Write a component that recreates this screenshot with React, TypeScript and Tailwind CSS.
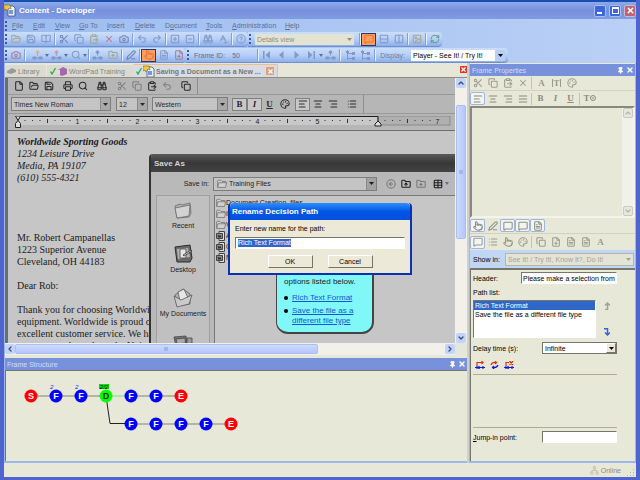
import type { ReactNode } from "react";
import { clsx } from "clsx";
import {
  AlignCenter,
  AlignJustify,
  AlignLeft,
  AlignRight,
  BookOpen,
  Binoculars,
  Camera,
  ChevronDown,
  ChevronLeft,
  ChevronRight,
  ChevronUp,
  CircleArrowLeft,
  CircleHelp,
  ClipboardPaste,
  Columns2,
  Copy,
  File,
  FilePlus,
  FileText,
  FolderOpen,
  FolderPlus,
  FolderUp,
  Image,
  List,
  MessageSquare,
  Network,
  Palette,
  PenLine,
  Pin,
  Pointer,
  Printer,
  Redo2,
  RefreshCw,
  Rows2,
  Save,
  Scissors,
  Search,
  SpellCheck,
  SquareMinus,
  SquarePlus,
  Table,
  Undo2,
  X
} from "lucide-react";
import type { LucideIcon } from "lucide-react";

type ToolProps = {
  icon: LucideIcon;
  label: string;
  className?: string;
};

const toolBox = "flex h-[13px] w-[15px] shrink-0 items-center justify-center";

function Tool({ icon: Icon, label, className }: ToolProps) {
  return (
    <button type="button" aria-label={label} className={clsx(toolBox, className)}>
      <Icon size={10} strokeWidth={2.5} />
    </button>
  );
}

function DrawnTool({ label, className, children }: { label: string; className?: string; children: ReactNode }) {
  return (
    <button type="button" aria-label={label} className={clsx(toolBox, className)}>
      {children}
    </button>
  );
}

function LetterTool({ label, className, children }: { label: string; className?: string; children: ReactNode }) {
  return (
    <button
      type="button"
      aria-label={label}
      className={clsx(toolBox, "font-['Liberation_Serif',serif] text-[9px] font-bold", className)}
    >
      {children}
    </button>
  );
}

function Sep({ className = "bg-[#7f9fd8] shadow-[1px_0_0_#e6effd]" }: { className?: string }) {
  return <span className={clsx("mx-px h-3 w-px shrink-0", className)} />;
}

function Grip() {
  return <span className="mx-px h-[10px] w-0 shrink-0 border-l-2 border-dotted border-[#3c5a9c]" />;
}

function Bar({ children }: { children: ReactNode }) {
  return (
    <div className="flex h-[15px] items-center rounded-r-sm border-b border-[#6f8fd0] bg-linear-to-b from-[#cbdefb] via-[#b7cff7] to-[#8eafe8] text-[#8299c6]">
      {children}
    </div>
  );
}

type DropProps = {
  label: string;
  value: string;
  className?: string;
  arrowClass?: string;
};

function Drop({ label, value, className, arrowClass }: DropProps) {
  return (
    <span className={clsx("relative flex shrink-0", className)}>
      <select aria-label={label} className="w-full appearance-none bg-transparent px-[2px] leading-[11px] outline-none">
        <option>{value}</option>
      </select>
      <span
        className={clsx(
          "pointer-events-none absolute inset-y-0 right-0 flex w-[10px] items-center justify-center",
          arrowClass
        )}
      >
        <svg width="5" height="3" viewBox="0 0 5 3" fill="currentColor">
          <path d="M0 0h5L2.5 3z" />
        </svg>
      </span>
    </span>
  );
}

function TinyArrow() {
  return (
    <svg width="4" height="3" viewBox="0 0 4 3" className="shrink-0" fill="#5d6f96">
      <path d="M0 0h4L2 3z" />
    </svg>
  );
}

function AppIcon() {
  return (
    <svg width="12" height="13" viewBox="0 0 12 13">
      <path d="M4 2h5l2 2v8H4z" fill="#eef1fa" stroke="#44516f" strokeWidth=".8" />
      <path d="M5 6h4v4H5z" fill="#6d9ae8" />
      <path d="M0 1h6l1 4-2-1-2 3-1-2-2 1z" fill="#f2c744" stroke="#6b5b22" strokeWidth=".5" />
    </svg>
  );
}

// pair of frames on a line, with a coloured head above them
function LinkIcon({ head = "#d8b48a" }: { head?: string }) {
  return (
    <svg width="11" height="10" viewBox="0 0 11 10" fill="none" stroke="currentColor">
      <path d="M0 8h11" strokeWidth="1.200" />
      <path d="M1 6.500h3v3H1zM7 6.500h3v3H7z" fill="currentColor" stroke="none" />
      <path d="M5.500 5.500V2" />
      <path d="m5.500 0 2.200 2.200-2.200 2.200-2.200-2.200z" fill={head} stroke="none" />
    </svg>
  );
}

function BranchIcon() {
  return (
    <svg width="11" height="10" viewBox="0 0 11 10" fill="none" stroke="currentColor">
      <path d="M2.500 0v10M2.500 3.500H9M2.500 8.500H9" />
      <path d="M1 1h3v2H1zM7 2h3v3H7zM7 7h3v3H7z" fill="currentColor" stroke="none" />
    </svg>
  );
}

function NavIcon({ d }: { d: string }) {
  return (
    <svg width="7" height="8" viewBox="0 0 7 8" fill="currentColor">
      <path d={d} />
    </svg>
  );
}

function FolderIcon({ size = 10 }: { size?: number }) {
  return (
    <svg width={size} height={size} viewBox="0 0 16 16" className="shrink-0" fill="#d0d0d0" stroke="#5a5a5a" strokeLinejoin="round">
      <path d="M1 13V3l1-1h4l2 2h6v3" />
      <path d="M1 13.5 3 6h12.500l-2 7.500z" />
    </svg>
  );
}

function WordFileIcon() {
  return (
    <svg width="10" height="10" viewBox="0 0 10 10" className="shrink-0">
      <path d="M3 .5h5.500v9H3z" fill="#ddd" stroke="#444" />
      <path d="M.5 2.500h6v5h-6z" fill="#8c8c8c" stroke="#444" />
      <path d="M2 4l1 2.500L4 4.500l1 2" fill="none" stroke="#111" strokeWidth=".8" />
    </svg>
  );
}

function RecentIcon() {
  return (
    <svg width="18" height="18" viewBox="0 0 18 18" stroke="#6a6a6a" strokeWidth=".8" strokeLinejoin="round">
      <path d="m1 5 5-2 2 1 8-2 1 10-2 4-12 1z" fill="#b4b4b4" />
      <path d="m1 7 15-3-1 11-12 2z" fill="#d2d2d2" />
    </svg>
  );
}

function DesktopIcon() {
  return (
    <svg width="21" height="20" viewBox="0 0 21 20">
      <path d="M2 3 17 1l2 13-2 4H4z" fill="#6a6a6a" stroke="#2c2c2c" />
      <path d="M4 5l11-1 2 9-12 2z" fill="#b4b4b4" />
      <path d="M7 5h6v9H7z" fill="#e5e5e5" stroke="#333" strokeWidth=".7" />
      <path d="m10 11 8-5 1 1-8 5z" fill="#ddd" stroke="#222" strokeWidth=".7" />
    </svg>
  );
}

function DocumentsIcon() {
  return (
    <svg width="20" height="20" viewBox="0 0 20 20" stroke="#5a5a5a" strokeWidth=".8" strokeLinejoin="round">
      <path d="m2 7 8-6 7 5v10l-13 2z" fill="#b2b2b2" />
      <path d="m5 4 6-3 4 9-8 3z" fill="#e6e6e6" />
      <path d="m1 8 7 4 11-5-3 9-12 3z" fill="#cacaca" />
    </svg>
  );
}

function ComputerIcon() {
  return (
    <svg width="20" height="14" viewBox="0 0 20 14" stroke="#444" strokeWidth=".8">
      <path d="m1 2 12-1 1 9-11 1z" fill="#777" />
      <path d="m3 4 9-1 .5 5L4 9z" fill="#aaa" />
      <path d="M14 3h5v10h-5z" fill="#999" />
      <path d="M4 11h9v3H4z" fill="#666" />
    </svg>
  );
}

function CheckMark() {
  return (
    <svg width="6" height="8" viewBox="0 0 6 8" fill="none" stroke="#35b04a" strokeWidth="1.400">
      <path d="m.5 4.500 1.500 2.500L5.500 1" />
    </svg>
  );
}

function TitleBar() {
  return (
    <header className="flex h-[19px] shrink-0 items-center gap-[3px] border-t-2 border-[#1550b0] bg-linear-to-b from-[#8ea9ea] via-[#7690dc] to-[#7f9ce3]">
      <AppIcon />
      <h1 className="flex-1 text-[8px] font-bold text-white">Content - Developer</h1>
      <button type="button" aria-label="Minimize" className="flex size-3 items-end rounded-xs border border-[#a9bdf0] bg-[#3c66dc] p-[2px]">
        <span className="h-[2px] w-[5px] bg-white" />
      </button>
      <button type="button" aria-label="Maximize" className="flex size-3 items-center justify-center rounded-xs border border-[#a9bdf0] bg-[#3c66dc]">
        <span className="size-[7px] border border-t-2 border-white" />
      </button>
      <button type="button" aria-label="Close" className="flex size-3 items-center justify-center rounded-xs border border-[#c9b6da] bg-[#bd6472] text-white">
        <X size={9} strokeWidth={4} />
      </button>
    </header>
  );
}

const menus = [
  { name: "File", width: "w-[21px]" },
  { name: "Edit", width: "w-[22px]" },
  { name: "View", width: "w-6" },
  { name: "Go To", width: "w-7" },
  { name: "Insert", width: "w-7" },
  { name: "Delete", width: "w-[30px]" },
  { name: "Document", width: "w-[41px]" },
  { name: "Tools", width: "w-[26px]" },
  { name: "Administration", width: "w-[53px]" },
  { name: "Help", width: "w-5" }
];

function MenuBar() {
  return (
    <nav className="flex h-[13px] items-center text-[#5f6f8f]">
      <Grip />
      <span className="w-1" />
      {menus.map((menu) => {
        const at = menu.name === "Document" ? 1 : 0;
        return (
          <button key={menu.name} type="button" className={clsx("shrink-0 text-left whitespace-nowrap", menu.width)}>
            {menu.name.slice(0, at)}
            <u>{menu.name[at]}</u>
            {menu.name.slice(at + 1)}
          </button>
        );
      })}
    </nav>
  );
}

function Toolbars() {
  return (
    <>
      <div className="flex">
        <Bar>
          <Grip />
          <Tool icon={FolderOpen} label="Open" className="text-[#a3a68c]" />
          <Tool icon={Save} label="Save" />
          <Tool icon={BookOpen} label="Preview" />
          <Sep />
          <Tool icon={Scissors} label="Cut" className="text-[#6f88bc]" />
          <Tool icon={Copy} label="Copy" />
          <Tool icon={ClipboardPaste} label="Paste" className="text-[#a3a68c]" />
          <Tool icon={X} label="Delete" className="text-[#c0748c]" />
          <Tool icon={Camera} label="Capture" className="text-[#6f82aa]" />
          <Sep />
          <Tool icon={Undo2} label="Undo" />
          <Tool icon={Redo2} label="Redo" />
          <Sep />
          <Tool icon={SquarePlus} label="Expand" />
          <Tool icon={SquareMinus} label="Collapse" />
          <Sep />
          <Tool icon={Binoculars} label="Find" />
          <Tool icon={SpellCheck} label="Spelling" />
          <Sep />
          <Tool icon={CircleHelp} label="Help topics" />
        </Bar>
        <Bar>
          <Grip />
          <Drop label="View" value="Details view" className="ml-[3px] w-[99px] bg-[#e3e3d3] text-[#8f8f80]" />
          <span className="w-1" />
          <Sep />
          <Tool icon={MessageSquare} label="Outline" className="border border-[#27348b] bg-[#f9a15c] text-[#f17038]" />
          <Tool icon={Rows2} label="Split rows" />
          <Tool icon={Columns2} label="Split columns" />
          <Sep />
          <Tool icon={Image} label="Properties" className="text-[#a3a68c]" />
          <Sep />
          <Tool icon={RefreshCw} label="Refresh" className="text-[#62a08b]" />
        </Bar>
      </div>
      <div className="mt-px flex">
        <Bar>
          <Grip />
          <Tool icon={Camera} label="Record" className="text-[#a07d94]" />
          <Sep />
          <span className="w-1" />
          <DrawnTool label="Insert frame">
            <LinkIcon />
          </DrawnTool>
          <TinyArrow />
          <DrawnTool label="Link frame">
            <LinkIcon head="#d893a4" />
          </DrawnTool>
          <TinyArrow />
          <Tool icon={Search} label="Find frame" />
          <TinyArrow />
          <Sep />
          <DrawnTool label="Move frame">
            <LinkIcon head="#8299c6" />
          </DrawnTool>
          <Tool icon={FolderPlus} label="Add resource" className="text-[#a3a68c]" />
          <Sep />
          <Tool icon={PenLine} label="Edit frame" className="text-[#6f82aa]" />
          <Sep />
          <Tool icon={Pointer} label="Action area" className="border border-[#27348b] bg-[#f9a15c] text-[#e87a44]" />
          <Tool icon={FileText} label="Frame text" />
          <Tool icon={FilePlus} label="New text" className="text-[#a07d94]" />
        </Bar>
        <Bar>
          <Grip />
          <label htmlFor="frame-id" className="pl-1 text-[#5f6f8f]">Frame ID:</label>
          <input id="frame-id" defaultValue="50" className="ml-[7px] w-6 bg-transparent text-[#5f6f8f] outline-none" />
          <Sep />
          <DrawnTool label="First">
            <NavIcon d="M0 0h1.500v8H0zM7 0v8L2.500 4z" />
          </DrawnTool>
          <DrawnTool label="Previous">
            <NavIcon d="M5.500 0v8L1 4z" />
          </DrawnTool>
          <DrawnTool label="Next">
            <NavIcon d="M1.500 0v8L6 4z" />
          </DrawnTool>
          <DrawnTool label="Last">
            <NavIcon d="M5.500 0H7v8H5.500zM0 0v8l4.500-4z" />
          </DrawnTool>
          <TinyArrow />
          <DrawnTool label="Paths">
            <LinkIcon head="#8299c6" />
          </DrawnTool>
          <Sep />
          <span className="w-[2px]" />
          <DrawnTool label="Branch">
            <BranchIcon />
          </DrawnTool>
          <DrawnTool label="Join">
            <BranchIcon />
          </DrawnTool>
          <Sep />
          <span className="pr-[6px] pl-1 text-[#6f7f9f]">Display:</span>
          <Drop
            label="Display"
            value="Player - See It! / Try It!"
            className="mr-[3px] w-[94px] bg-white text-black"
            arrowClass="bg-[#b7cff7]"
          />
        </Bar>
      </div>
    </>
  );
}

function Tabs() {
  return (
    <div className="flex h-[14px] shrink-0 items-end bg-[#e7e7d9] text-[#85857c]">
      <button type="button" className="flex h-3 w-[41px] items-center gap-[2px] rounded-t-xs bg-[#dbdbd2] pl-[2px]">
        <svg width="9" height="6" viewBox="0 0 9 6" fill="#9b9b9b">
          <path d="m0 3 5-3 4 2v2L4 6 0 5z" />
        </svg>
        Library
      </button>
      <button type="button" className="ml-px flex h-3 w-[86px] items-center gap-[2px] rounded-t-xs bg-[#dbdbd2] pl-[3px]">
        <CheckMark />
        <svg width="9" height="9" viewBox="0 0 9 9">
          <path d="m0 3 5-3 4 2v5L4 9 0 7z" fill="#a468ad" />
          <path d="M0 3v4l2 1V3z" fill="#e6dcea" />
        </svg>
        WordPad Training
      </button>
      <button type="button" className="flex h-[13px] w-[145px] items-center gap-px rounded-t-xs border-t border-r border-[#f0c080] bg-[#d9dce4] pl-[3px] font-bold whitespace-nowrap text-[#77776f]">
        <CheckMark />
        <AppIcon />
        <span className="flex-1 text-left">Saving a Document as a New ...</span>
        <span className="mr-[3px] flex size-2 items-center justify-center bg-[#dba17b] text-white">
          <X size={7} strokeWidth={4} />
        </span>
      </button>
      <span className="flex-1" />
      <button type="button" aria-label="Close document" className="mb-[4px] flex size-[7px] items-center justify-center bg-[#e0352c] text-white">
        <X size={7} strokeWidth={4} />
      </button>
    </div>
  );
}

function GreyDrop({ label, value, className }: DropProps) {
  return (
    <Drop
      label={label}
      value={value}
      className={clsx("h-[14px] items-center border border-[#7d7d7d] bg-[#c4c4c4]", className)}
      arrowClass="border-l border-[#8a8a8a] bg-[#a9a9a9]"
    />
  );
}

const inches = [1, 2, 3, 4, 5, 7];

function Ruler() {
  const ticks = Array.from({ length: 56 }, (_, i) => i + 1);
  return (
    <div className="h-[17px] overflow-hidden border-b border-[#6c6c6c] pt-[2px]">
      <svg width="447" height="15" viewBox="0 0 447 15">
        <rect x="9" y="0" width="361" height="9" fill="#c8c8c8" />
        <rect x="370" y="0" width="72" height="9" fill="#b0b0b0" stroke="#8a8a8a" />
        <path d="M9 .5h361v9" fill="none" stroke="#222" />
        {ticks.map((tick) =>
          tick % 8 === 0 ? null : (
            <rect key={tick} x={9 + tick * 7.5} y={tick % 4 ? 4 : 3} width="1" height={tick % 4 ? 1 : 4} fill="#333" />
          )
        )}
        {inches.map((inch) => (
          <text key={inch} x={9.5 + inch * 60} y="8" fontSize="7" textAnchor="middle" fill="#222">
            {inch}
          </text>
        ))}
        <path d="M7.500 0h5l-2.500 4.500 2.500 3v4h-5v-4l2.500-3z" fill="#ddd" stroke="#222" />
        <path d="m370 5 3 3v2h-6V8z" fill="#ddd" stroke="#222" />
      </svg>
    </div>
  );
}

function WordPad() {
  const pressed = "border border-[#808080] bg-[#c8c8c8]";
  return (
    <div className="bg-[#b6b6b6] text-[#2a2a2a]">
      <div className="flex h-[17px] items-center border-b border-[#999] pl-[3px]">
        <Tool icon={File} label="New file" />
        <Tool icon={FolderOpen} label="Open file" />
        <Tool icon={Save} label="Save file" />
        <span className="w-1" />
        <Tool icon={Printer} label="Print" />
        <Tool icon={Search} label="Print preview" />
        <span className="w-1" />
        <Tool icon={Binoculars} label="Find text" />
        <span className="w-[5px]" />
        <Tool icon={Scissors} label="Cut text" className="text-[#808080]" />
        <Tool icon={Copy} label="Copy text" className="text-[#808080]" />
        <Tool icon={ClipboardPaste} label="Paste text" />
        <Tool icon={Undo2} label="Undo typing" className="text-[#808080]" />
        <span className="w-1" />
        <Tool icon={Copy} label="Date and time" />
        <span className="ml-1 h-full w-px bg-[#8d8d8d]" />
      </div>
      <div className="flex h-[19px] items-center border-b border-[#999] pl-[3px]">
        <GreyDrop label="Font" value="Times New Roman" className="w-[100px]" />
        <GreyDrop label="Font size" value="12" className="ml-[5px] w-8" />
        <GreyDrop label="Script" value="Western" className="ml-1 w-[76px]" />
        <LetterTool label="Bold" className={clsx("ml-1", pressed)}>B</LetterTool>
        <LetterTool label="Italic" className={clsx("italic", pressed)}>I</LetterTool>
        <LetterTool label="Underline" className="underline">U</LetterTool>
        <Tool icon={Palette} label="Colour" />
        <Tool icon={AlignLeft} label="Align left" className={clsx("ml-[3px]", pressed)} />
        <Tool icon={AlignCenter} label="Align centre" />
        <Tool icon={AlignRight} label="Align right" />
        <Tool icon={List} label="Bullets" className="ml-1" />
        <span className="ml-1 h-full w-px bg-[#8d8d8d]" />
      </div>
      <Ruler />
    </div>
  );
}

function Letter() {
  return (
    <article className="min-h-0 flex-1 overflow-hidden bg-[#c6c6c6] pt-[5px] pl-[9px] font-['Liberation_Serif',serif] text-[10px] leading-3 whitespace-pre text-[#1c1c1c]">
      <div className="italic">
        <p className="font-bold">Worldwide Sporting Goods</p>
        <p>1234 Leisure Drive</p>
        <p>Media, PA 19107</p>
        <p>(610) 555-4321</p>
      </div>
      <p className="mt-12">Mr. Robert Campanellas</p>
      <p>1223 Superior Avenue</p>
      <p>Cleveland, OH 44183</p>
      <p className="mt-3">Dear Rob:</p>
      <p className="mt-3">Thank you for choosing Worldwide</p>
      <p>equipment. Worldwide is proud of</p>
      <p>excellent customer service. We hav</p>
      <p>your events throughout the United</p>
    </article>
  );
}

const places = [
  { name: "Recent", icon: <RecentIcon /> },
  { name: "Desktop", icon: <DesktopIcon /> },
  { name: "My Documents", icon: <DocumentsIcon /> },
  { name: "", icon: <ComputerIcon /> }
];

const files = [
  { name: "Document Creation_files", folder: true },
  { name: "I", folder: true },
  { name: "V", folder: true },
  { name: "A", folder: false },
  { name: "C", folder: false },
  { name: "N", folder: false }
];

function SaveAs() {
  return (
    <section className="absolute top-[76px] right-0 bottom-0 left-[141px] flex flex-col overflow-hidden rounded-tl-sm border-l-2 border-[#333] bg-[#b9b9b9] text-[#1c1c1c]">
      <h2 className="flex h-[18px] shrink-0 items-center bg-linear-to-b from-[#5a5a5a] via-[#383838] to-[#444] pl-[3px] text-[8px] font-bold text-[#d5d5d5]">
        Save As
      </h2>
      <div className="flex h-[23px] shrink-0 items-center">
        <span className="w-[62px] pr-1 text-right">Save in:</span>
        <span className="flex h-[14px] w-[164px] items-center border border-[#7d7d7d] bg-[#c4c4c4] pl-[3px]">
          <FolderIcon />
          <Drop
            label="Save in"
            value="Training Files"
            className="h-full flex-1 items-center"
            arrowClass="border-l border-[#8a8a8a] bg-[#a2a2a2]"
          />
        </span>
        <Tool icon={CircleArrowLeft} label="Back" className="ml-[6px] text-[#777]" />
        <Tool icon={FolderUp} label="Up one level" />
        <Tool icon={FolderPlus} label="New folder" className="text-[#777]" />
        <Tool icon={Table} label="Views" className="ml-[2px]" />
        <TinyArrow />
      </div>
      <div className="flex flex-1 gap-1 pl-[5px]">
        <ul className="flex w-[54px] shrink-0 flex-col items-center border border-[#a0a0a0] bg-[#c0c0c0] pt-1">
          {places.map((place) => (
            <li key={place.name} className="flex h-11 shrink-0 flex-col items-center whitespace-nowrap">
              <span className="flex h-5 items-center">{place.icon}</span>
              <span className="leading-[11px]">{place.name}</span>
            </li>
          ))}
        </ul>
        <ul className="flex-1 border-t border-l border-[#777] bg-[#c6c6c6] pt-px pl-px">
          {files.map((file) => (
            <li key={file.name} className="flex h-[11px] items-center leading-[11px]">
              {file.folder ? <FolderIcon /> : <WordFileIcon />}
              {file.name}
            </li>
          ))}
        </ul>
      </div>
    </section>
  );
}

function Bullet() {
  return <span className="mt-[3px] size-1 shrink-0 rounded-full bg-black" />;
}

function Callout() {
  return (
    <aside className="absolute top-[175px] left-[268px] w-[98px] rounded-b-xl border border-r-2 border-b-2 border-[#444] bg-[#80f8f8] px-[7px] pt-[23px] pb-[6px] text-[8px] leading-[10px] text-[#222]">
      <p>options listed below.</p>
      <ul className="mt-[6px] space-y-[3px] whitespace-nowrap">
        <li className="flex gap-1">
          <Bullet />
          <a href="#rich-text" className="text-[#1457d8] underline">Rich Text Format</a>
        </li>
        <li className="flex gap-1">
          <Bullet />
          <a href="#other-type" className="text-[#1457d8] underline">
            Save the file as a
            <br />
            different file type
          </a>
        </li>
      </ul>
    </aside>
  );
}

const dialogButton =
  "h-[13px] w-[45px] border border-t-white border-l-white border-r-[#77756a] border-b-[#77756a] bg-[#ece9d8] text-center";

function RenameDialog() {
  return (
    <form className="absolute top-[125px] left-[220px] flex h-[72px] w-[184px] flex-col rounded-t border-2 border-t-0 border-[#0831b4] bg-[#ece9d8] text-black">
      <h2 className="flex h-[17px] shrink-0 items-center rounded-t bg-linear-to-b from-[#2f8cff] via-[#0355e6] to-[#0450da] pl-[2px] text-[8px] font-bold text-white">
        Rename Decision Path
      </h2>
      <div className="flex flex-1 flex-col px-[5px] pt-[4px]">
        <label htmlFor="path-name" className="leading-[10px]">Enter new name for the path:</label>
        <span className="mt-[3px] flex h-3 items-center border border-[#77756a] border-r-white border-b-white bg-white px-[2px]">
          <input
            id="path-name"
            defaultValue="Rich Text Format"
            className="h-2 w-[53px] bg-[#2f66c8] leading-2 text-white outline-none"
          />
        </span>
        <div className="mt-[6px] flex justify-center gap-[15px]">
          <button type="button" className={dialogButton}>OK</button>
          <button type="button" className={dialogButton}>Cancel</button>
        </div>
      </div>
    </form>
  );
}

function ScrollButton({ icon: Icon, label, disabled }: { icon: LucideIcon; label: string; disabled?: boolean }) {
  return (
    <button
      type="button"
      aria-label={label}
      className={clsx(
        "flex size-[10px] shrink-0 items-center justify-center rounded-xs",
        disabled ? "border border-[#c9c9bd] bg-[#e8e8dc] text-[#b5b5aa]" : "bg-[#c3d3fb] text-[#35507e]"
      )}
    >
      <Icon size={8} strokeWidth={4} />
    </button>
  );
}

function Workspace() {
  return (
    <div className="grid min-h-0 flex-1 grid-cols-[1fr_12px] grid-rows-[1fr_12px] border-t border-[#8d8d80] bg-[#e7e7d9]">
      <div className="relative flex min-h-0 min-w-0 flex-col overflow-hidden border-l-[3px] border-[#6d6d6d]">
        <WordPad />
        <Letter />
        <SaveAs />
        <Callout />
        <RenameDialog />
      </div>
      <div className="flex flex-col items-center bg-[#f1f0ea]">
        <ScrollButton icon={ChevronUp} label="Scroll up" />
        <span className="flex-[17]" />
        <span className="flex w-[10px] flex-[132] items-center justify-center rounded-xs border border-[#a9bff3] bg-linear-to-r from-[#cddafd] to-[#b4c7f9]">
          <span className="h-1 w-1 bg-[#9fb7f1]" />
        </span>
        <span className="flex-[94]" />
        <ScrollButton icon={ChevronDown} label="Scroll down" />
      </div>
      <div className="flex items-center bg-[#f1f0ea]">
        <ScrollButton icon={ChevronLeft} label="Scroll left" />
        <span className="flex h-[10px] flex-[300] items-center justify-center rounded-xs border border-[#a9bff3] bg-linear-to-b from-[#cddafd] to-[#b4c7f9]">
          <span className="size-1 bg-[#9fb7f1]" />
        </span>
        <span className="flex-[127]" />
        <ScrollButton icon={ChevronRight} label="Scroll right" />
      </div>
    </div>
  );
}

function PanelTitle({ children }: { children: ReactNode }) {
  return (
    <div className="flex h-3 shrink-0 items-center gap-[2px] bg-[#7791db] pr-px pl-[2px] text-white">
      <h2 className="flex-1 text-[#d3ddf7]">{children}</h2>
      <button type="button" aria-label="Pin panel">
        <Pin size={7} strokeWidth={3} fill="currentColor" />
      </button>
      <button type="button" aria-label="Close panel">
        <X size={8} strokeWidth={4} />
      </button>
    </div>
  );
}

type FrameNode = { x: number; y: number; kind: "S" | "F" | "D" | "E"; mark?: string };

const nodes: FrameNode[] = [
  { x: 25, y: 25, kind: "S" },
  { x: 50, y: 25, kind: "F", mark: "2" },
  { x: 75, y: 25, kind: "F", mark: "2" },
  { x: 100, y: 25, kind: "D" },
  { x: 125, y: 25, kind: "F" },
  { x: 150, y: 25, kind: "F" },
  { x: 175, y: 25, kind: "E" },
  { x: 125, y: 53, kind: "F" },
  { x: 150, y: 53, kind: "F" },
  { x: 175, y: 53, kind: "F" },
  { x: 200, y: 53, kind: "F" },
  { x: 225, y: 53, kind: "E" }
];

const nodeFill = { S: "#ff0000", E: "#ff0000", F: "#0000ff", D: "#00ff00" };

function FrameStructure() {
  return (
    <section className="mt-[3px] flex h-[105px] shrink-0 flex-col border-b-2 border-[#9ab8ea]">
      <PanelTitle>Frame Structure</PanelTitle>
      <div className="flex-1 border-t border-l border-[#77756a] bg-[#e8e8d9]">
        <svg width="240" height="80" viewBox="0 0 240 80">
          <path d="M25 25h75M125 25h50M125 53h100" stroke="#808078" />
          <path d="M100 25h25" stroke="#70e870" />
          <path d="M100 25l4 27.500h21" fill="none" stroke="#222" />
          <rect x="93" y="13" width="10" height="5" fill="#00e000" />
          <text x="98" y="18" fontSize="6" textAnchor="middle" fontStyle="italic">2/2</text>
          {nodes.map((node) => (
            <g key={`${node.x}-${node.y}`}>
              {node.mark && (
                <text x={node.x - 6} y={node.y - 7} fontSize="6" fontStyle="italic" fill="#1010e0">
                  {node.mark}
                </text>
              )}
              <circle cx={node.x} cy={node.y} r="6.5" fill={nodeFill[node.kind]} />
              <text
                x={node.x}
                y={node.y + 3}
                fontSize="9"
                fontWeight="bold"
                textAnchor="middle"
                fill={node.kind === "D" ? "#003000" : "#ffffff"}
              >
                {node.kind}
              </text>
            </g>
          ))}
        </svg>
      </div>
    </section>
  );
}

const toggled = "rounded-xs border border-[#9fb6dc] bg-[#f4f5f2]";

function FrameProperties() {
  return (
    <section className="flex w-[167px] shrink-0 flex-col border-x border-b-2 border-[#9ab8ea] bg-[#e8e8d9] pt-px">
      <PanelTitle>Frame Properties</PanelTitle>
      <div className="flex h-[15px] items-center border-b border-[#d2d2c2] text-[#9a9a8f]">
        <Tool icon={Scissors} label="Cut selection" />
        <Tool icon={Copy} label="Copy selection" />
        <Tool icon={ClipboardPaste} label="Paste selection" />
        <Tool icon={X} label="Clear selection" />
        <Sep className="bg-[#c2c2b4]" />
        <LetterTool label="Font face" className="ml-px">A</LetterTool>
        <LetterTool label="Text width">
          <span className="border-x border-current leading-2">T</span>
        </LetterTool>
        <Tool icon={Palette} label="Text colour" />
      </div>
      <div className="flex h-[15px] items-center text-[#8a8a80]">
        <Tool icon={AlignLeft} label="Left" className={toggled} />
        <Tool icon={AlignCenter} label="Centre" />
        <Tool icon={AlignRight} label="Right" />
        <Tool icon={AlignJustify} label="Justify" />
        <Sep className="bg-[#c2c2b4]" />
        <LetterTool label="Bold text">B</LetterTool>
        <LetterTool label="Italic text" className="italic">I</LetterTool>
        <LetterTool label="Underline text" className="underline">U</LetterTool>
        <Sep className="bg-[#c2c2b4]" />
        <LetterTool label="Symbol" className="ml-px">
          T
          <svg width="6" height="8" viewBox="0 0 6 8" fill="none" stroke="currentColor">
            <circle cx="3" cy="3" r="2.500" />
            <path d="M2 3h2" />
          </svg>
        </LetterTool>
      </div>
      <div className="flex h-28 shrink-0 border-2 border-[#8a887c] border-r-[#f4f4ec] border-b-[#f4f4ec]">
        <textarea aria-label="Frame text" className="h-full min-w-0 flex-1 resize-none outline-none" />
        <div className="flex w-[11px] flex-col items-center justify-between bg-[#f1f1ea]">
          <ScrollButton icon={ChevronUp} label="Scroll text up" disabled />
          <ScrollButton icon={ChevronDown} label="Scroll text down" disabled />
        </div>
      </div>
      <div className="flex h-4 items-center border-b border-[#d2d2c2] text-[#8f8f86]">
        <Tool icon={Pointer} label="Action" className={toggled} />
        <Tool icon={PenLine} label="Draw" />
        <Tool icon={MessageSquare} label="Bubble" className={toggled} />
        <Tool icon={MessageSquare} label="Bubble text" className={toggled} />
        <Tool icon={FileText} label="Notes" className={toggled} />
      </div>
      <div className="flex h-4 items-center text-[#9a9a8f]">
        <Tool icon={MessageSquare} label="Bubble on" className={toggled} />
        <Tool icon={List} label="Text list" />
        <Tool icon={Pointer} label="Point" />
        <Tool icon={Palette} label="Fill" />
        <Sep className="bg-[#c2c2b4]" />
        <Tool icon={Copy} label="Duplicate" />
        <Tool icon={FilePlus} label="Add note" />
        <Tool icon={FileText} label="Note" />
        <Tool icon={FileText} label="Note below" />
        <LetterTool label="Replace font">A</LetterTool>
      </div>
      <div className="flex h-[18px] shrink-0 items-center bg-[#c0d6f6] pr-[2px] pl-[3px]">
        <span className="w-8 shrink-0">Show in:</span>
        <Drop
          label="Show in"
          value="See It! / Try It!, Know It?, Do It!"
          className="w-[129px] border border-[#b5b5a4] bg-[#e3e3d6] text-[#a3a396]"
        />
      </div>
      <div className="flex-1 border-t-2 border-l border-[#77756a] pt-[2px] pr-[18px] pl-[2px]">
        <div className="flex h-3 items-center justify-between">
          <label htmlFor="header">Header:</label>
          <input
            id="header"
            defaultValue="Please make a selection from"
            className="h-3 w-[96px] border border-[#77756a] border-r-white border-b-white bg-white pl-px outline-none"
          />
        </div>
        <p id="paths" className="mt-1 leading-[10px]">Path list:</p>
        <div className="mt-[2px] flex">
          <ul aria-labelledby="paths" className="h-[38px] w-[123px] border border-[#77756a] border-r-white border-b-white bg-white">
            <li className="h-[9px] bg-[#2f66c8] pl-px leading-[9px] text-white">Rich Text Format</li>
            <li className="h-[9px] pl-px leading-[9px]">Save the file as a different file type</li>
          </ul>
          <div className="flex flex-1 flex-col items-center justify-between py-[2px]">
            <button type="button" aria-label="Move path up">
              <svg width="6" height="8" viewBox="0 0 6 8" fill="none" stroke="#a0a0a0" strokeWidth="1.500">
                <path d="M1 7.500h2.500V1M1 3.500 3.500 1 6 3.500" />
              </svg>
            </button>
            <button type="button" aria-label="Move path down">
              <svg width="6" height="8" viewBox="0 0 6 8" fill="none" stroke="#2f66d8" strokeWidth="1.500">
                <path d="M0 .8h3.500V7M1 4.500 3.500 7 6 4.500" />
              </svg>
            </button>
          </div>
        </div>
        <div className="mt-1 flex h-3 items-center justify-between">
          <span>Delay time (s):</span>
          <Drop
            label="Delay time (s)"
            value="Infinite"
            className="h-3 w-[75px] items-center border border-[#77756a] bg-white"
            arrowClass="border border-white border-r-[#77756a] border-b-[#77756a] bg-[#ece9d8]"
          />
        </div>
        <div className="mt-[5px] flex h-3 items-center gap-[5px] pl-[2px]">
          <button type="button" aria-label="Set jump">
            <svg width="10" height="8" viewBox="0 0 10 8" fill="none">
              <path d="M2 5V1.500h6M6.500 0 8 1.500 6.500 3" stroke="#e03010" strokeWidth="1.200" />
              <path d="M0 6.500h10M2 5v3M8 5v3M3.500 5.200 5 6.500 3.500 8" stroke="#1818d0" strokeWidth="1.200" />
            </svg>
          </button>
          <button type="button" aria-label="Reset jump">
            <svg width="9" height="8" viewBox="0 0 9 8" fill="none" strokeWidth="1.200">
              <path d="M1 4q1-3 5-2.500M5 0l1.500 1.500L5 3" stroke="#e03010" />
              <path d="M8 4Q7 7 3 6.500M4 5 2.500 6.500 4 8" stroke="#1818d0" />
            </svg>
          </button>
          <button type="button" aria-label="Delete jump">
            <svg width="10" height="8" viewBox="0 0 10 8" fill="none">
              <path d="M2 5V1.500h3M5.500 0l3.500 4M9 0 5.500 4" stroke="#e03010" strokeWidth="1.200" />
              <path d="M0 6.500h10M2 5v3M8 5v3M3.500 5.200 5 6.500 3.500 8" stroke="#1818d0" strokeWidth="1.200" />
            </svg>
          </button>
        </div>
        <hr className="mt-[3px] border-[#b3aa98]" />
        <hr className="mt-[52px] border-[#b3aa98]" />
        <div className="mt-[3px] flex h-3 items-center justify-between">
          <label htmlFor="jump-in">
            <u>J</u>ump-in point:
          </label>
          <input id="jump-in" className="h-3 w-[75px] border border-[#77756a] border-r-white border-b-white bg-white px-[2px] outline-none" />
        </div>
      </div>
    </section>
  );
}

function StatusBar() {
  return (
    <footer className="flex h-[14px] shrink-0 items-center justify-end gap-[2px] bg-[#e8e8d9] pr-px text-[#8a8a80]">
      <Network size={9} className="text-[#bcbca8]" />
      Online
      <svg width="8" height="8" viewBox="0 0 8 8" className="ml-1 self-end" fill="#b5b5a6">
        <path d="M6 0h1v1H6zM6 3h1v1H6zM6 6h1v1H6zM3 3h1v1H3zM3 6h1v1H3zM0 6h1v1H0z" />
      </svg>
    </footer>
  );
}

export default function App() {
  return (
    <div className="flex h-screen min-h-[480px] flex-col overflow-hidden border-x-4 border-b-[3px] border-[#5064d0] bg-[#e8e8d9] font-['Liberation_Sans',Arial,sans-serif] text-[7px] leading-[9px]">
      <TitleBar />
      <div className="shrink-0 bg-linear-to-r from-[#9cbcf0] to-[#bad0f5]">
        <MenuBar />
        <Toolbars />
      </div>
      <div className="flex min-h-0 flex-1">
        <main className="flex min-w-0 flex-1 flex-col border-l border-[#9ab8ea]">
          <Tabs />
          <Workspace />
          <FrameStructure />
        </main>
        <span className="w-[2px] bg-[#cdd0cc]" />
        <FrameProperties />
      </div>
      <StatusBar />
    </div>
  );
}
